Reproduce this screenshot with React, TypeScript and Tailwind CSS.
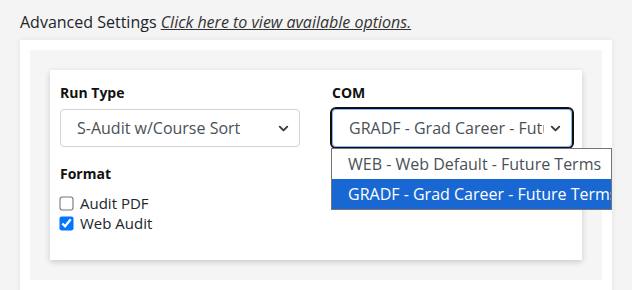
import { ChevronDown } from 'lucide-react'

const font = { fontFamily: '"Open Sans", "Noto Sans", sans-serif' }

function FakeSelect({ value, focused }: { value: string; focused?: boolean }) {
  return (
    <div
      className={
        'flex h-[38px] w-[240px] items-center rounded-[4px] border bg-white pl-[16px] pr-[8px] ' +
        (focused
          ? 'border-[#86b7fe] outline-2 outline-[#101010]'
          : 'border-[#ced4da]')
      }
    >
      <span className="flex-1 overflow-hidden whitespace-nowrap text-[16px] text-[#495057]">
        {value}
      </span>
      <ChevronDown size={15} strokeWidth={3} className="ml-[4px] shrink-0 text-[#343a40]" />
    </div>
  )
}

function Check({ label, checked }: { label: string; checked?: boolean }) {
  return (
    <label className="flex h-[20px] items-center gap-[7px] text-[15px] text-[#212529]">
      <input
        type="checkbox"
        defaultChecked={checked}
        className="m-0 h-[13px] w-[13px] scale-[1.08] accent-[#0075ff]"
      />
      {label}
    </label>
  )
}

export default function App() {
  return (
    <div className="relative h-[290px] w-[632px] overflow-hidden bg-[#f4f4f4]" style={font}>
      <div className="px-[20px] pt-[10px] text-[16px] leading-[24px] text-[#212529]">
        Advanced Settings{' '}
        <a className="italic text-[#333] underline">Click here to view available options.</a>
      </div>

      <div className="mx-[20px] mt-[6px] bg-white px-[10px] pt-[10px] pb-[20px] shadow-[0_0_6px_rgba(0,0,0,0.08)]">
        <div className="bg-[#f5f5f5] px-[20px] pt-[20px] pb-[20px]">
          <div className="bg-white px-[10px] pt-[13px] pb-[27px] shadow-[0_2px_6px_rgba(0,0,0,0.18)]">
            <div className="grid grid-cols-[240px_240px] gap-x-[32px]">
              <div>
                <div className="mb-[6px] text-[14px] font-bold leading-[20px] text-[#111]">Run Type</div>
                <FakeSelect value="S-Audit w/Course Sort" />
              </div>
              <div className="relative">
                <div className="mb-[6px] text-[14px] font-bold leading-[20px] text-[#111]">COM</div>
                <FakeSelect value="GRADF - Grad Career - Future Terms" focused />
                <div className="absolute top-[65px] left-[-1px] z-10 w-[281px] border border-[#767676] bg-white text-[16px]">
                  <div className="h-[30px] pl-[16px] leading-[30px] text-[#495057]">
                    WEB - Web Default - Future Terms
                  </div>
                  <div className="h-[30px] overflow-hidden whitespace-nowrap bg-[#1967d2] pl-[16px] leading-[30px] text-white">
                    GRADF - Grad Career - Future Terms
                  </div>
                </div>
              </div>
            </div>
            <div className="mt-[17px] text-[14px] font-bold leading-[20px] text-[#111]">Format</div>
            <div className="mt-[9px] flex flex-col">
              <Check label="Audit PDF" />
              <Check label="Web Audit" checked />
            </div>
          </div>
        </div>
      </div>
    </div>
  )
}
